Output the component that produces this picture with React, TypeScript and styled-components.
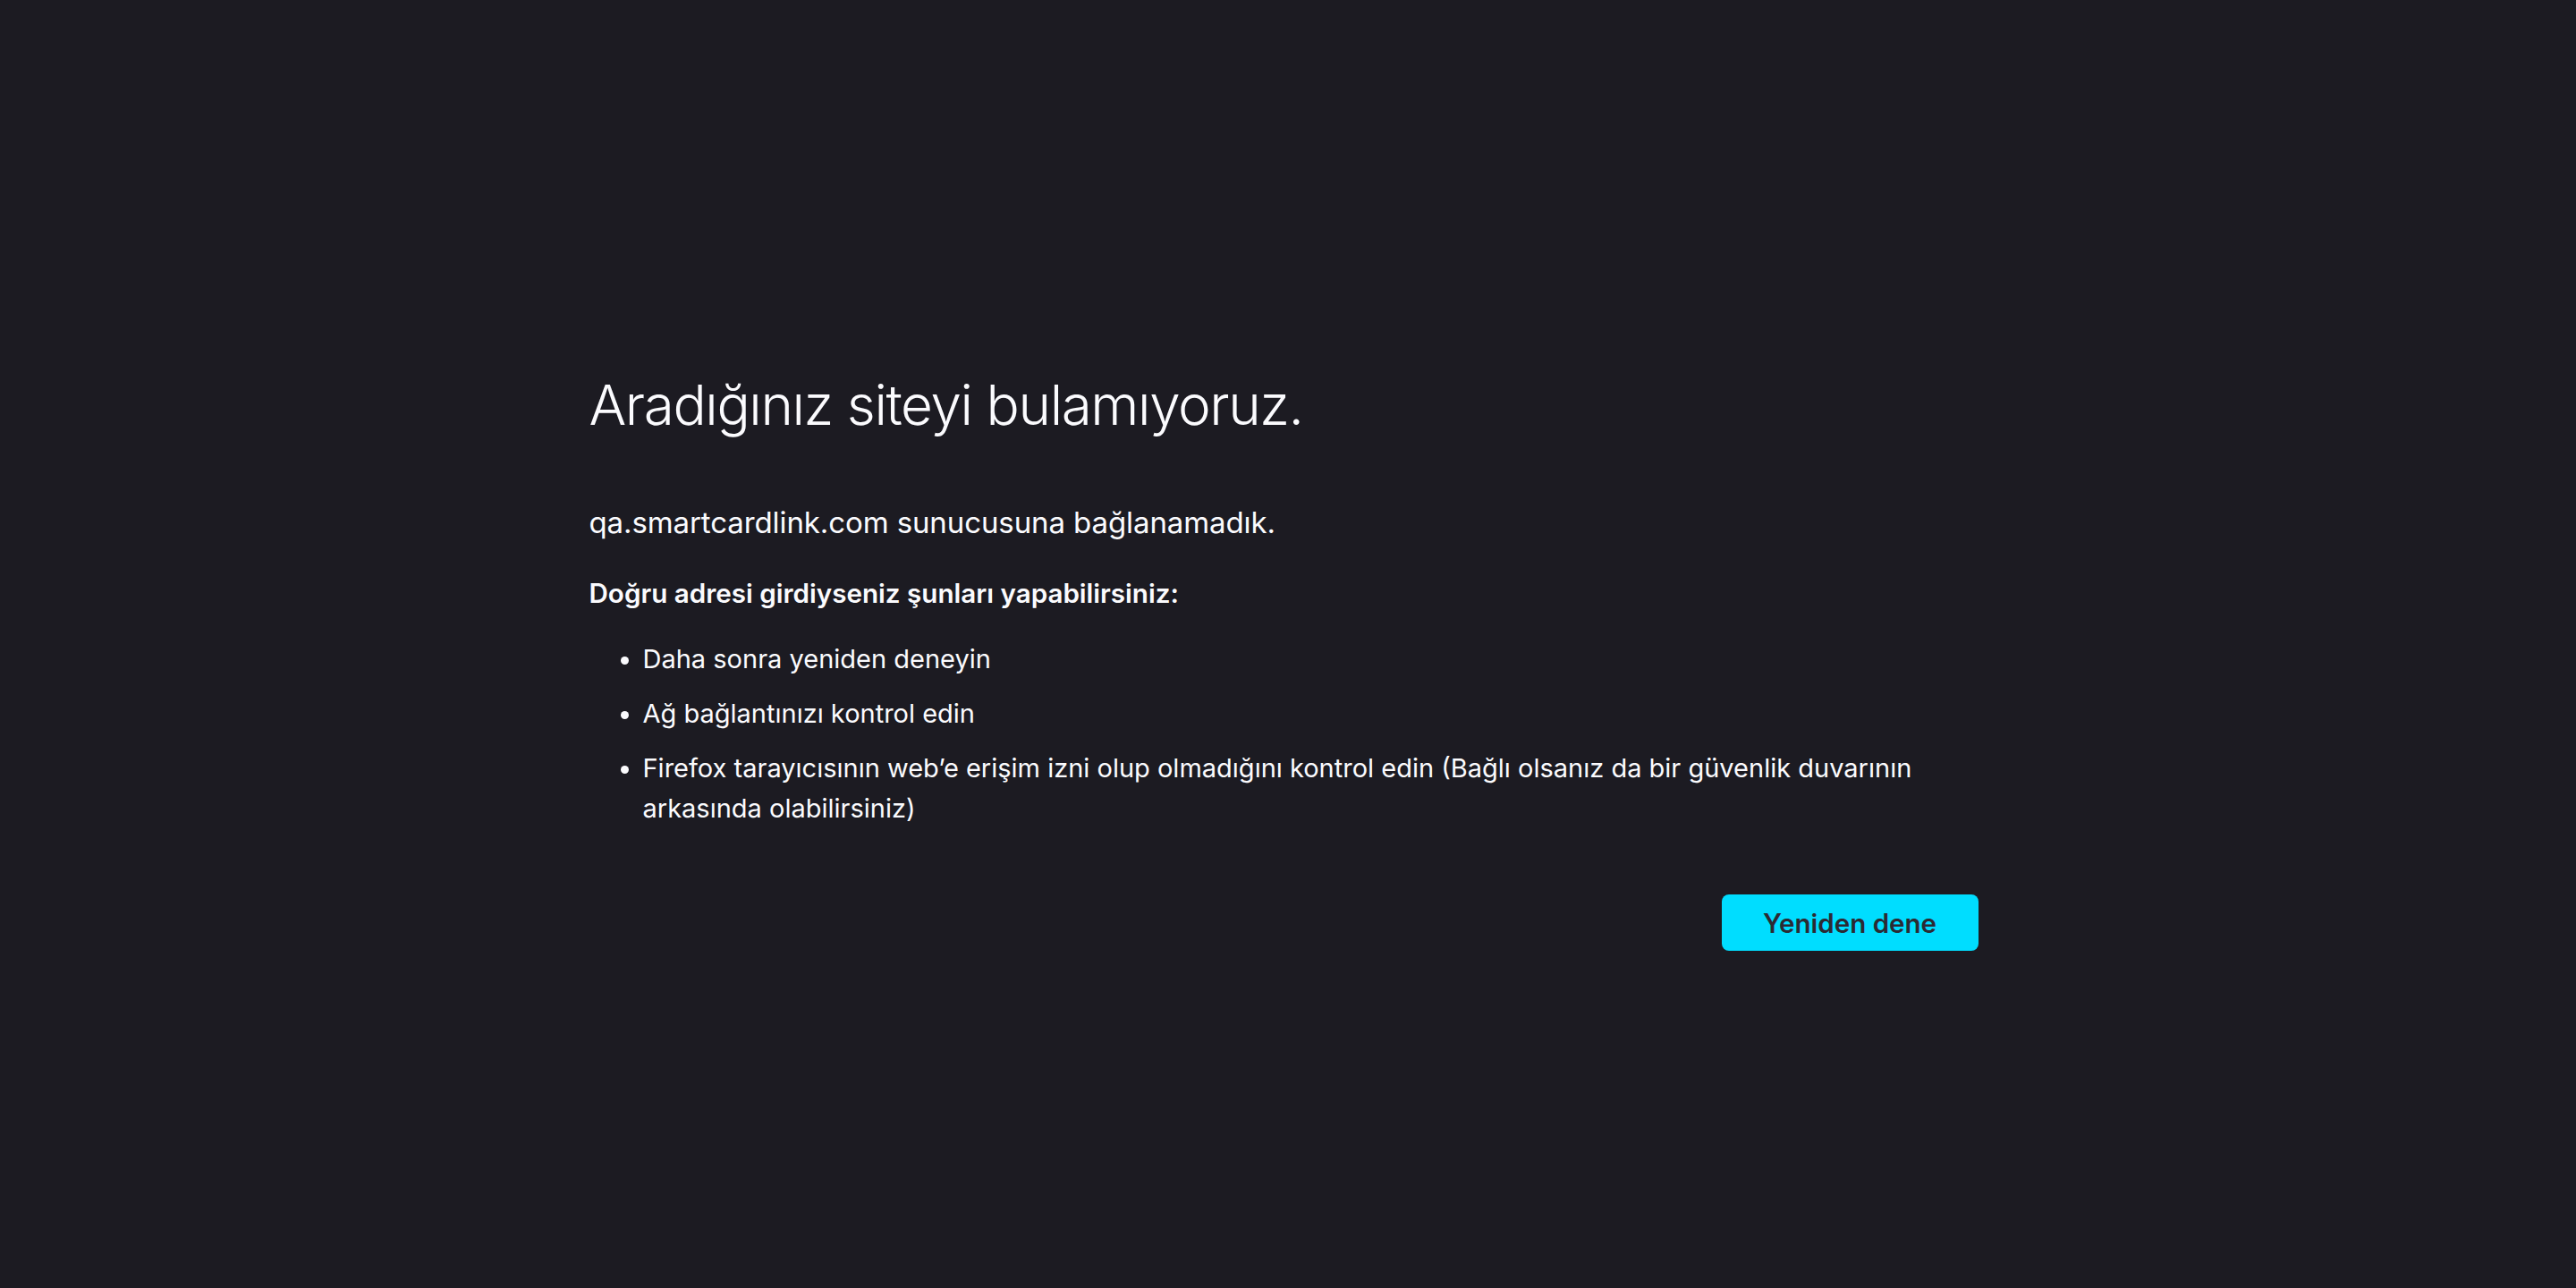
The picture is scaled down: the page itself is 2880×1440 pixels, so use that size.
import React from "react";
import styled, { createGlobalStyle } from "styled-components";

const GlobalStyle = createGlobalStyle`
  html, body {
    margin: 0;
    padding: 0;
    background: #1c1b22;
  }
  body {
    font-family: Inter, "Noto Sans", "Liberation Sans", sans-serif;
    color: #fbfbfe;
  }
`;

const Page = styled.main`
  min-height: 100vh;
  box-sizing: border-box;
  padding: 36px 10px 0 0;
  display: flex;
  align-items: center;
  justify-content: center;
  background: #1c1b22;
`;

const Container = styled.div`
  width: 1553px;
  display: flex;
  flex-direction: column;
`;

const Title = styled.h1`
  margin: 0;
  font-size: 62px;
  line-height: 80px;
  font-weight: 300;
  letter-spacing: -1.4px;
`;

const ShortDesc = styled.p`
  margin: 67px 0 0;
  font-size: 33px;
  line-height: 48px;
  font-weight: 400;
  letter-spacing: -0.1px;
`;

const Lead = styled.p`
  margin: 32px 0 0;
  font-size: 29.6px;
  line-height: 46px;
  font-weight: 600;
`;

const List = styled.ul`
  margin: 28px 0 0;
  padding: 0 0 0 60px;
  display: flex;
  flex-direction: column;
  gap: 16px;
`;

const Item = styled.li`
  font-size: 29px;
  line-height: 45px;
  font-weight: 400;
`;

const Actions = styled.div`
  margin-top: 74px;
  display: flex;
  justify-content: flex-end;
`;

const Button = styled.button`
  width: 287px;
  height: 63px;
  border: none;
  border-radius: 8px;
  background: #00ddff;
  color: #2b2a33;
  font-family: Inter, "Noto Sans", "Liberation Sans", sans-serif;
  font-size: 29.5px;
  font-weight: 600;
  cursor: pointer;
`;

export default function App() {
  return (
    <>
      <GlobalStyle />
      <Page>
        <Container>
          <Title>Aradığınız siteyi bulamıyoruz.</Title>
          <ShortDesc>qa.smartcardlink.com sunucusuna bağlanamadık.</ShortDesc>
          <Lead>Doğru adresi girdiyseniz şunları yapabilirsiniz:</Lead>
          <List>
            <Item>Daha sonra yeniden deneyin</Item>
            <Item>Ağ bağlantınızı kontrol edin</Item>
            <Item>
              Firefox tarayıcısının web’e erişim izni olup olmadığını kontrol edin (Bağlı olsanız da bir güvenlik duvarının arkasında olabilirsiniz)
            </Item>
          </List>
          <Actions>
            <Button>Yeniden dene</Button>
          </Actions>
        </Container>
      </Page>
    </>
  );
}
